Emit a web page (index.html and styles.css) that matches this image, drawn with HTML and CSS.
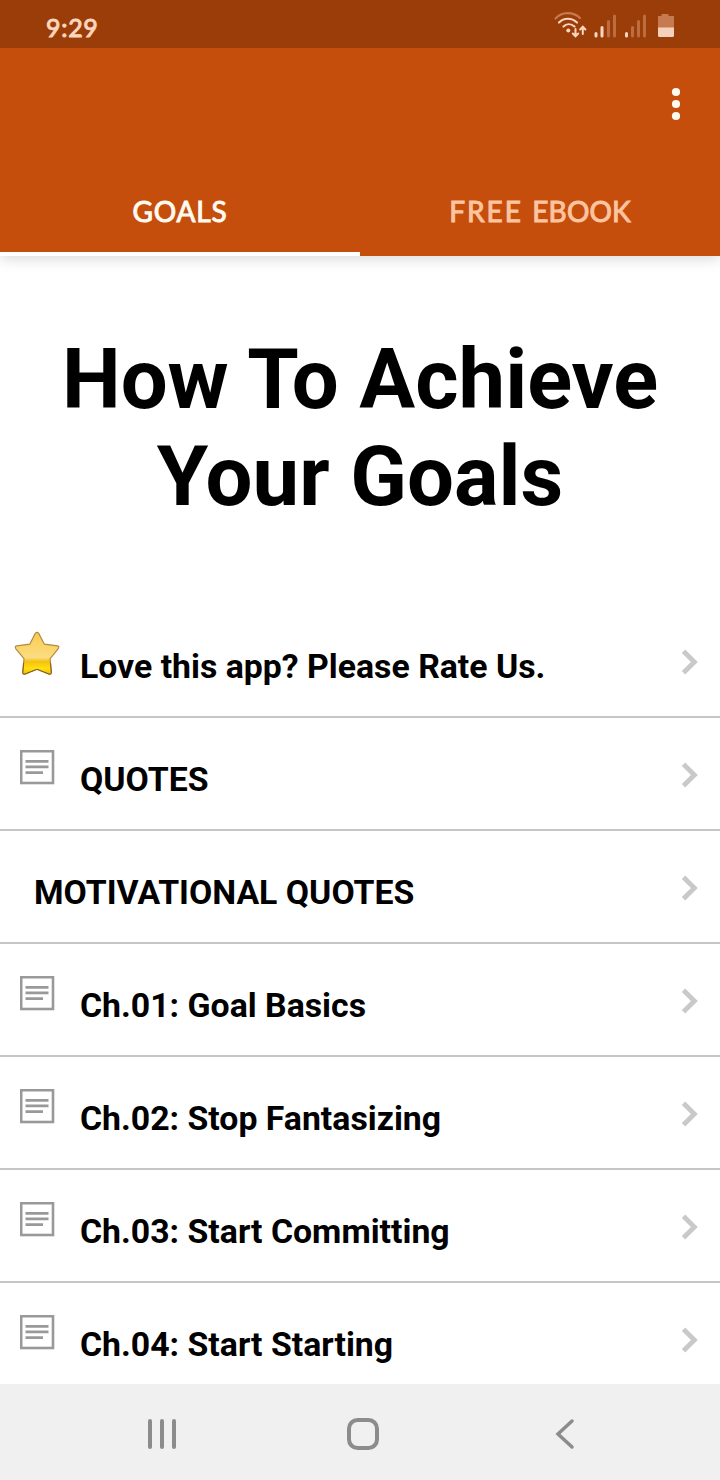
FILE: index.html
```
<!DOCTYPE html>
<html lang="en">
<head>
<meta charset="utf-8">
<title>How To Achieve Your Goals</title>
<link rel="stylesheet" href="styles.css">
</head>
<body>
<svg class="defs" width="0" height="0" aria-hidden="true">
  <defs>
    <linearGradient id="gold" x1="0" y1="0" x2="0" y2="1">
      <stop offset="0" stop-color="#f8cc50"/><stop offset=".6" stop-color="#fbdc80"/>
      <stop offset=".7" stop-color="#f5c010"/><stop offset=".86" stop-color="#ffe010"/><stop offset="1" stop-color="#f5b800"/>
    </linearGradient>
  </defs>
  <symbol id="doc" viewBox="0 0 36 36">
    <rect x="1.200" y="1.200" width="31.800" height="31.800" fill="none" stroke="#999" stroke-width="2.600"/>
    <path d="M5.500 11.300h23M5.500 16.900h23M5.500 22.600h17.500" fill="none" stroke="#999" stroke-width="2.700"/>
  </symbol>
  <symbol id="chev" viewBox="0 0 18 28">
    <path d="M2.500 3.200l10.900 10.800-10.900 10.800" fill="none" stroke="#c9c9c9" stroke-width="4.800"/>
  </symbol>
</svg>
<div class="screen">
  <header class="status">
    <span class="clock">9:29</span>
    <svg class="tray" width="124" height="30" viewBox="0 0 124 30" fill="none" stroke="#fad5c0" stroke-width="2.200" stroke-linecap="round">
      <path d="M2.500 9.500C9 2.500 20 2.500 27 9" stroke="#c77a50"/>
      <path d="M6 13.500c5-5 12.500-5 18 0M10.500 17.500c3-3 7.500-3 11 0"/>
      <circle cx="15.300" cy="21.500" r="2" fill="#fad5c0" stroke="none"/>
      <path d="M22.500 20v7M19.800 24.500l2.700 2.800 2.700-2.800M29.800 25v-7M27.200 20.500l2.600-2.700 2.600 2.700" stroke-width="2"/>
      <g stroke-width="3"><path d="M43 24.500v2.500M49 18.500V27M73.500 24.500v2.500"/><path d="M55.500 12.500V27M61.500 7V27M79.500 18.500V27M85.500 12.500V27M91.500 7V27" stroke="#bd6d40"/></g>
      <path d="M105.500 7h3V5h7v2h5.500v12h-16V7z" fill="#c77a50" stroke="none"/>
      <path d="M105 18.500h16v8q0 1.500-1.500 1.500h-13q-1.500 0-1.500-1.500z" fill="#f5d0bc" stroke="none"/>
    </svg>
  </header>
  <div class="appbar">
    <div class="toolbar">
      <svg width="10" height="34" viewBox="0 0 10 34" fill="#fffaf0"><circle cx="5" cy="5" r="4.100"/><circle cx="5" cy="17" r="4.100"/><circle cx="5" cy="29" r="4.100"/></svg>
    </div>
    <nav class="tabs"><div class="tab active"><span class="goals">GOALS</span></div><div class="tab"><span class="ebook"><span class="free">FREE</span> EBOOK</span></div></nav>
  </div>
  <main class="content">
    <h1>How To Achieve<br>Your Goals</h1>
    <ul class="list">
      <li class="row"><svg class="star" width="46" height="46" viewBox="0 0 46 46"><path d="M21.300 2.400q1.700-2 3.400 0l5.700 10.800 13 1.700q2.400.7.700 2.900l-8 9.900 1.300 13.800q-.2 2.200-2.400 1.600L23 38.300l-12 4.800q-2.100.6-2.300-1.500l1.300-13.900-8.100-9.900q-1.600-2.200.8-2.900l13-1.700z" fill="url(#gold)" stroke="#b48a42" stroke-width="1.200"/><path d="M9.600 32l-.9 9.600q.2 2.100 2.300 1.500l12-4.800 12 4.800q2.200.6 2.400-1.600L36.500 32" fill="none" stroke="#85611c" stroke-width="1"/></svg><span>Love this app? Please Rate Us.</span><svg class="chev"><use href="#chev"/></svg></li>
      <li class="row"><svg class="doc"><use href="#doc"/></svg><span>QUOTES</span><svg class="chev"><use href="#chev"/></svg></li>
      <li class="row plain"><span>MOTIVATIONAL QUOTES</span><svg class="chev"><use href="#chev"/></svg></li>
      <li class="row"><svg class="doc"><use href="#doc"/></svg><span>Ch.01: Goal Basics</span><svg class="chev"><use href="#chev"/></svg></li>
      <li class="row"><svg class="doc"><use href="#doc"/></svg><span>Ch.02: Stop Fantasizing</span><svg class="chev"><use href="#chev"/></svg></li>
      <li class="row"><svg class="doc"><use href="#doc"/></svg><span>Ch.03: Start Committing</span><svg class="chev"><use href="#chev"/></svg></li>
      <li class="row"><svg class="doc"><use href="#doc"/></svg><span>Ch.04: Start Starting</span><svg class="chev"><use href="#chev"/></svg></li>
    </ul>
  </main>
  <footer class="navbar">
    <svg width="34" height="36" viewBox="0 0 34 36"><path d="M5 5v26M17 5v26M29 5v26"/></svg>
    <svg class="home" width="36" height="36" viewBox="0 0 36 36"><rect x="4" y="4" width="28" height="28" rx="8.500"/></svg>
    <svg width="24" height="36" viewBox="0 0 24 36"><path d="M19 5L5 18l14 13" stroke-width="3.500"/></svg>
  </footer>
</div>
</body>
</html>
```
FILE: styles.css
```
* { box-sizing: border-box; }
body { margin: 0; background: #fff; font-family: Roboto, "Liberation Sans", sans-serif; }
.defs { display: block; position: absolute; }
.screen { width: 720px; height: 1480px; display: flex; flex-direction: column; overflow: hidden; }
.status { height: 48px; flex: none; background: #9b3d08; display: flex; justify-content: space-between; align-items: flex-start; padding: 9px 43px 0 46px; z-index: 2; }
.clock { font: 400 25px/36px Lato, sans-serif; color: #fbd5bd; letter-spacing: .7px; -webkit-text-stroke: 1px #fbd5bd; }
.appbar { height: 208px; flex: none; background: #c54e0d; display: flex; flex-direction: column; box-shadow: 0 2px 14px rgba(0,0,0,.17); z-index: 1; }
.toolbar { height: 112px; display: flex; justify-content: flex-end; align-items: center; padding-right: 39px; }
.tabs { flex: 1; display: grid; grid-template-columns: 1fr 1fr; }
.tab { display: flex; justify-content: center; align-items: center; padding: 13px 0 3px; border-bottom: 4px solid transparent; font: 400 28px/36px Lato, sans-serif; color: #fdc4a0; -webkit-text-stroke: 1px currentColor; }
.tab.active { color: #fffaf0; border-color: #fff; }
.goals { letter-spacing: .8px; }
.ebook { letter-spacing: .2px; word-spacing: 2px; }
.free { letter-spacing: 2px; }
.content { flex: 1; min-height: 0; overflow: hidden; }
h1 { margin: 75px 0 0; height: 274px; text-align: center; font-size: 83.2px; line-height: 97px; font-weight: 700; color: #000; }
.list { list-style: none; margin: 0; padding: 0; }
.row { height: 113px; display: flex; align-items: flex-start; padding: 25px 21px 0 20px; border-bottom: 2px solid #c6c6c6; color: #000; font-size: 33.8px; line-height: 40px; font-weight: 700; }
.row span { flex: 1; padding-top: 17px; white-space: nowrap; }
.row.plain { padding-left: 34px; }
.doc { width: 36px; height: 36px; margin: 7px 24px 0 0; }
.star { margin: 1px 20px 0 -6px; }
.chev { width: 18px; height: 28px; margin-top: 18px; }
.navbar { height: 96px; flex: none; background: #f0f0f0; display: flex; align-items: center; justify-content: space-between; padding: 4px 143px 0 145px; }
.navbar svg { fill: none; stroke: #8c8c8c; stroke-width: 4; stroke-linecap: round; }
.navbar .home { margin-right: 6px; }
```
